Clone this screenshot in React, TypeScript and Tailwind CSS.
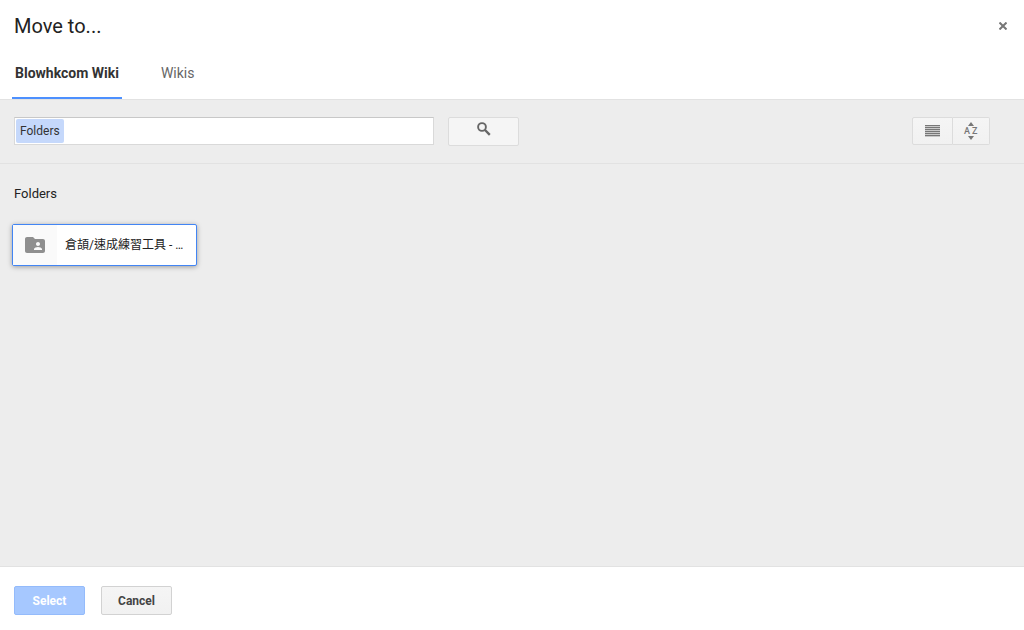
import { useState } from "react";
import clsx from "clsx";

const tabs = ["Blowhkcom Wiki", "Wikis"];

const folders = [{ id: "tools", name: "倉頡/速成練習工具 - Blowhkcom Wiki" }];

function SearchIcon() {
  return (
    <svg width="14" height="14" viewBox="0 0 14 14" fill="none" stroke="#666" aria-hidden="true">
      <circle cx="5" cy="5" r="3.9" strokeWidth="1.9" />
      <path d="M8 8l4.8 4.8" strokeWidth="2.4" />
    </svg>
  );
}

function ListIcon() {
  return (
    <svg width="15" height="12" viewBox="0 0 15 12" fill="#777" aria-hidden="true">
      <path d="M0 0h15v1H0zM0 2h15v1H0zM0 4h15v1H0zM0 6h15v1H0zM0 8h15v1H0zM0 10h15v1H0z" />
      <path d="M0 1h15v1H0zM0 3h15v1H0zM0 5h15v1H0zM0 7h15v1H0zM0 9h15v1H0zM0 11h15v1H0z" opacity=".35" />
    </svg>
  );
}

function SortIcon() {
  return (
    <svg width="16" height="18" viewBox="0 0 16 18" fill="#777" aria-hidden="true">
      <path d="M8 0l3 4H5zM8 18l3-4H5z" />
      <text x="1" y="12" fontSize="9" fontWeight="500" className="font-['Roboto',sans-serif]">A</text>
      <text x="9" y="12" fontSize="9" fontWeight="500" className="font-['Roboto',sans-serif]">Z</text>
    </svg>
  );
}

function SharedFolderIcon() {
  return (
    <svg width="24" height="24" viewBox="0 0 24 24" fill="#8f8f8f" aria-hidden="true">
      <path d="M20 6h-8l-2-2H4c-1.100 0-1.990.9-1.990 2L2 18c0 1.100.9 2 2 2h16c1.100 0 2-.9 2-2V8c0-1.100-.9-2-2-2zm-5 3c1.100 0 2 .9 2 2s-.9 2-2 2-2-.9-2-2 .9-2 2-2zm4 8h-8v-1c0-1.330 2.670-2 4-2s4 .67 4 2v1z" />
    </svg>
  );
}

function CloseIcon() {
  return (
    <svg width="8" height="8" viewBox="0 0 8 8" stroke="#777" strokeWidth="2" aria-hidden="true">
      <path d="M.5 .5l7 7M7.500 .5l-7 7" />
    </svg>
  );
}

export default function App() {
  const [activeTab, setActiveTab] = useState(tabs[0]);
  const [selected, setSelected] = useState("tools");
  const [query, setQuery] = useState("");

  return (
    <div className="flex min-h-screen flex-col bg-white font-['Roboto','Noto_Sans_CJK_TC',sans-serif] text-[#222]">
      <header>
        <div className="flex h-12 items-center justify-between pt-1 pr-4 pl-3.5">
          <h1 className="text-[20px] leading-6">Move to...</h1>
          <button type="button" aria-label="Close" className="p-[5px] -mr-1">
            <CloseIcon />
          </button>
        </div>

        <nav className="flex h-[51px] gap-9 pl-3">
          {tabs.map((tab) => (
            <button
              key={tab}
              type="button"
              onClick={() => setActiveTab(tab)}
              className={clsx(
                "border-b-2 px-[3px] text-sm",
                tab === activeTab ? "border-[#4d90fe] font-bold text-[#333]" : "border-transparent text-[#666]"
              )}
            >
              {tab}
            </button>
          ))}
        </nav>
      </header>

      <main className="flex-1 border-y border-[#e2e2e2] bg-[#ededed]">
        <div className="flex h-16 items-center border-b border-[#e2e2e2] pr-[34px] pb-px pl-3.5">
          {/* Search box with the current filter as a chip */}
          <label className="flex h-7 w-[420px] items-center border border-[#d9d9d9] border-t-[#c8c8c8] bg-white p-px">
            <span className="h-6 rounded-xs bg-[#c5d8fb] px-1 text-[12px] leading-6 text-[#333]">Folders</span>
            <input
              type="text"
              aria-label="Search"
              value={query}
              onChange={(e) => setQuery(e.target.value)}
              className="min-w-0 flex-1 px-1 text-[12px] outline-none"
            />
          </label>
          <button
            type="button"
            aria-label="Search"
            className="ml-3.5 flex h-[29px] w-[71px] items-center justify-center rounded-xs border border-[#dcdcdc] bg-[#f5f5f5] pb-1"
          >
            <SearchIcon />
          </button>

          <div className="ml-auto flex">
            <button
              type="button"
              aria-label="List view"
              className="flex h-7 w-[41px] items-center justify-center rounded-l-xs border border-[#dcdcdc] bg-linear-to-b from-[#f5f5f5] to-[#f1f1f1]"
            >
              <ListIcon />
            </button>
            <button
              type="button"
              aria-label="Sort"
              className="flex h-7 w-[37px] items-center justify-center rounded-r-xs border border-l-0 border-[#dcdcdc] bg-linear-to-b from-[#f5f5f5] to-[#f1f1f1]"
            >
              <SortIcon />
            </button>
          </div>
        </div>

        <section className="px-3 pt-5">
          <h2 className="pl-0.5 text-[13px] leading-5">Folders</h2>
          <div className="mt-5 flex flex-wrap gap-4">
            {folders.map((folder) => (
              <button
                key={folder.id}
                type="button"
                onClick={() => setSelected(folder.id)}
                className={clsx(
                  "flex h-[42px] w-[185px] rounded-xs border bg-white text-left",
                  folder.id === selected
                    ? "border-[#4285f4] shadow-[0_1px_5px_rgba(0,0,0,0.35)]"
                    : "border-[#d9d9d9]"
                )}
              >
                <span className="flex h-full w-11 shrink-0 items-center justify-center bg-[#fafafa]">
                  <SharedFolderIcon />
                </span>
                <span className="min-w-0 flex-1 truncate pr-3 pl-2 text-[12px] leading-10">{folder.name}</span>
              </button>
            ))}
          </div>
        </section>
      </main>

      <footer className="flex h-[63px] gap-4 px-3.5 pt-[19px] text-[12px] font-bold">
        <button type="button" className="h-[29px] w-[71px] rounded-xs border border-[#94bbfb] bg-[#a6c8ff] text-white">
          Select
        </button>
        <button
          type="button"
          className="h-[29px] w-[71px] rounded-xs border border-[#d2d2d2] bg-linear-to-b from-[#f5f5f5] to-[#f1f1f1] text-[#444]"
        >
          Cancel
        </button>
      </footer>
    </div>
  );
}
